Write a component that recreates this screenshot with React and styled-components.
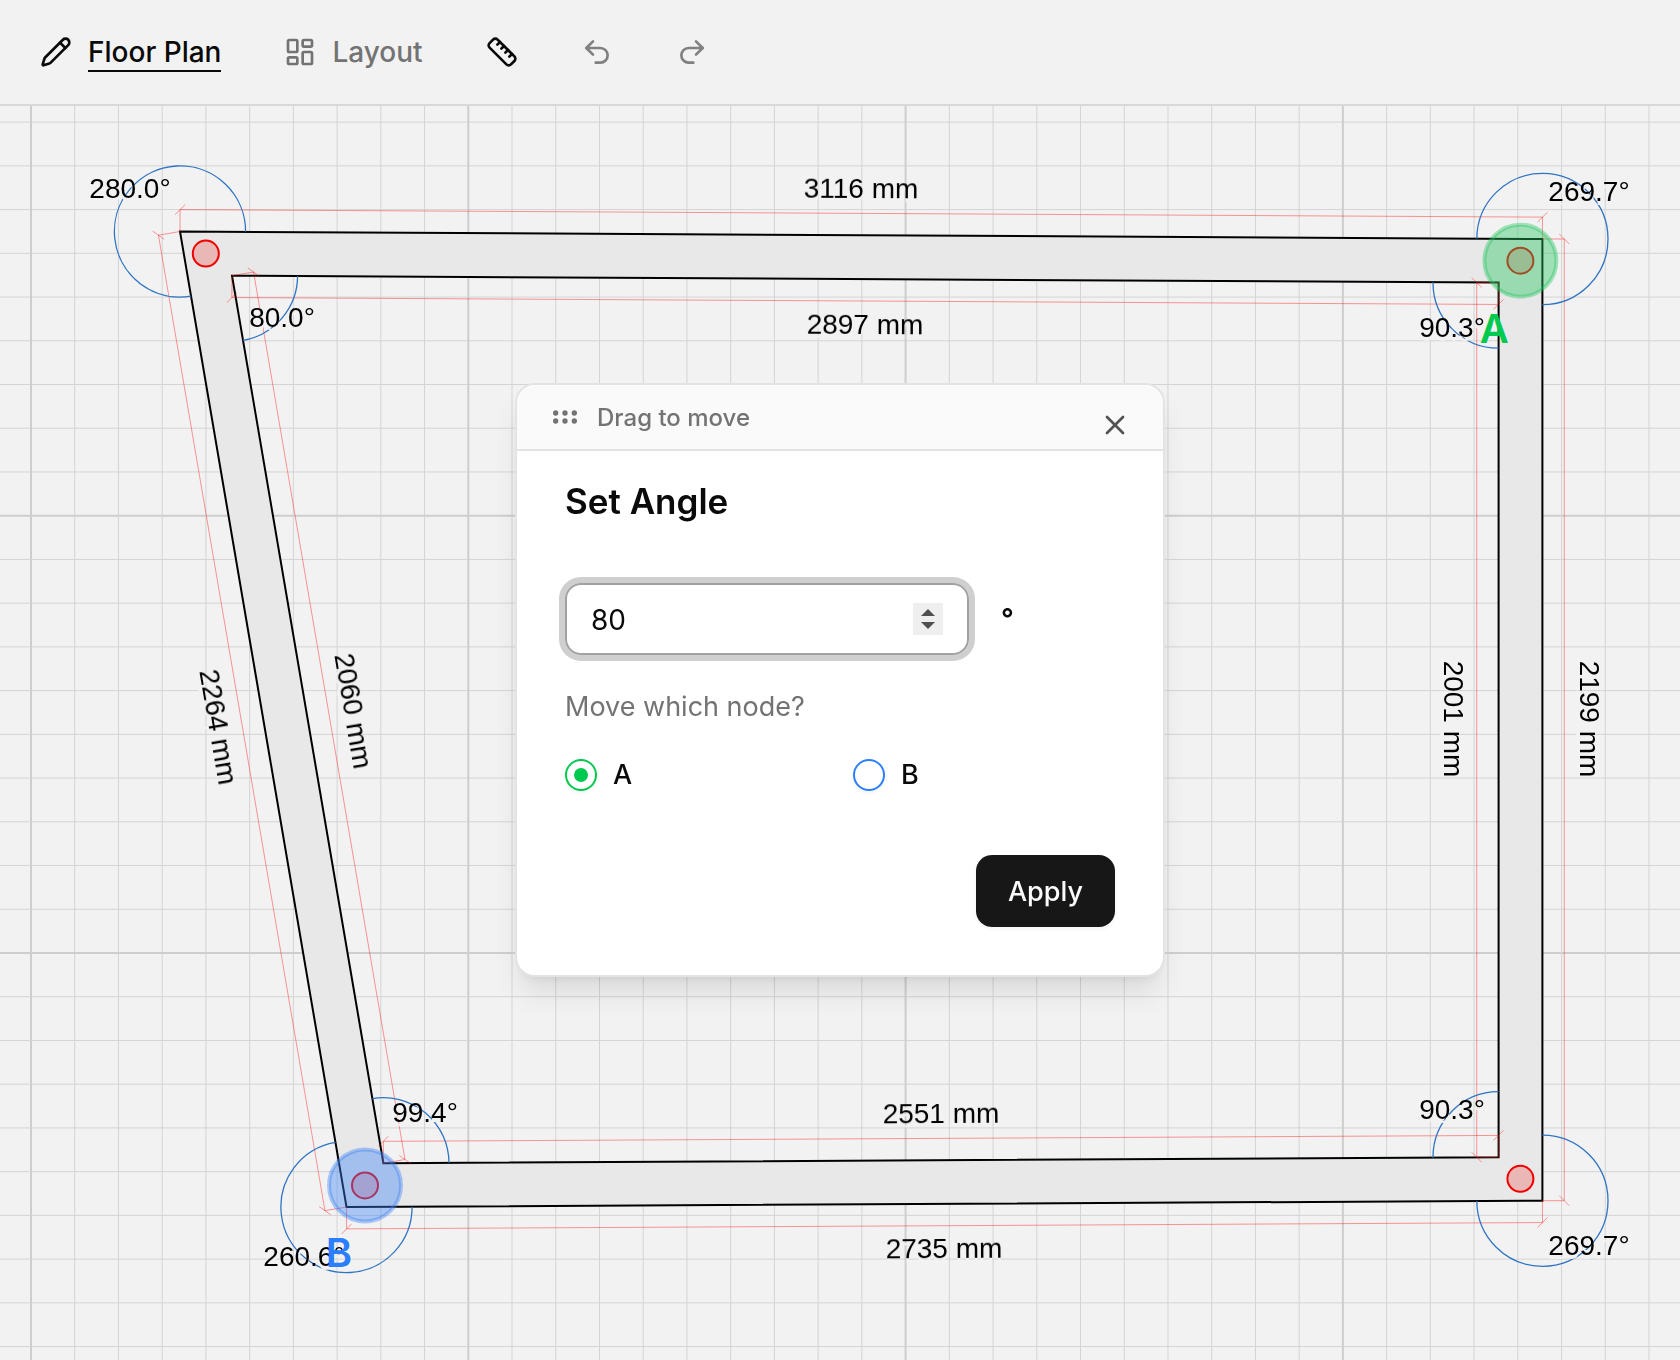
import React, { useState } from "react";
import styled, { createGlobalStyle } from "styled-components";
import {
  GripHorizontal,
  LayoutDashboard,
  Pencil,
  Redo2,
  Ruler,
  Undo2,
  X,
} from "lucide-react";

const GlobalStyle = createGlobalStyle`
  *, *::before, *::after {
    box-sizing: border-box;
  }
  body {
    margin: 0;
    background: #f2f2f2;
    color: #0a0a0a;
    font-family: Inter, "Liberation Sans", sans-serif;
  }
  button, input {
    font-family: inherit;
  }
`;

const Page = styled.div`
  display: flex;
  flex-direction: column;
  height: 100vh;
  overflow: hidden;
`;

const Toolbar = styled.header`
  display: flex;
  align-items: center;
  gap: 63px;
  padding: 32px 40px;
  border-bottom: 2px solid #d8d8d8;
`;

const ToolButton = styled.button`
  display: flex;
  align-items: center;
  gap: 16px;
  height: 40px;
  padding: 0;
  border: 0;
  background: none;
  color: ${(props) => props.$color || "#0a0a0a"};
  font-size: 28px;
  font-weight: 500;
  line-height: 36px;
  cursor: pointer;
`;

const ToolLabel = styled.span`
  border-top: 2px solid transparent;
  border-bottom: 2px solid ${(props) => (props.$active ? "#0a0a0a" : "transparent")};
`;

const Canvas = styled.main`
  position: relative;
  flex: 1;
  min-height: 0;
`;

const Drawing = styled.svg`
  display: block;
  width: 100%;
  height: 100%;
`;

const DrawingText = styled.text`
  font-family: "Liberation Sans", Arial, sans-serif;
  font-size: 28px;
  text-anchor: middle;
  fill: #000;
  filter: drop-shadow(0 4px 0 #f2f2f2);
`;

const MarkerText = styled.text`
  font-size: 40px;
  font-weight: 600;
  text-anchor: middle;
  fill: ${(props) => props.$color};
`;

const Dialog = styled.section`
  position: fixed;
  top: 50%;
  left: 50%;
  width: 650px;
  max-width: 100%;
  transform: translate(-50%, -50%);
  overflow: hidden;
  border: 2px solid #e3e3e3;
  border-radius: 20px;
  background: #fff;
  box-shadow: 0 20px 30px -6px rgba(0, 0, 0, 0.1), 0 8px 12px -8px rgba(0, 0, 0, 0.1);
`;

const DialogHandle = styled.div`
  display: flex;
  align-items: center;
  gap: 16px;
  height: 66px;
  padding: 0 32px;
  border-bottom: 2px solid #e3e3e3;
  background: #fafafa;
  color: #737373;
  font-size: 24px;
  font-weight: 500;
  cursor: move;
`;

const CloseButton = styled.button`
  position: absolute;
  top: 24px;
  right: 32px;
  display: flex;
  padding: 0;
  border: 0;
  background: none;
  color: #525252;
  cursor: pointer;
`;

const DialogForm = styled.form`
  display: flex;
  flex-direction: column;
  padding: 32px 48px 48px;
`;

const Title = styled.h2`
  margin: 0 0 64px;
  font-size: 35px;
  font-weight: 600;
  line-height: 36px;
`;

const AngleRow = styled.div`
  display: flex;
  align-items: center;
  gap: 32px;
  margin-bottom: 32px;
`;

const AngleField = styled.div`
  display: flex;
  align-items: center;
  width: 404px;
  height: 72px;
  padding: 0 24px;
  border: 2px solid #a1a1a1;
  border-radius: 16px;
  box-shadow: 0 0 0 6px #cfcfcf;
`;

const AngleInput = styled.input`
  flex: 1;
  min-width: 0;
  padding: 2px 0 0;
  border: 0;
  outline: 0;
  background: none;
  color: #0a0a0a;
  font-size: 28px;
  appearance: textfield;

  &::-webkit-inner-spin-button {
    appearance: none;
    margin: 0;
  }
`;

const Spinner = styled.div`
  display: flex;
  flex-direction: column;
  width: 30px;
  height: 32px;
  background: #efefef;
`;

const SpinButton = styled.button`
  display: flex;
  flex: 1;
  align-items: ${(props) => (props.$up ? "flex-end" : "flex-start")};
  justify-content: center;
  padding: ${(props) => (props.$up ? "0 0 2px" : "4px 0 0")};
  border: 0;
  background: none;
  color: #505050;
`;

const Unit = styled.span`
  font-size: 28px;
  font-weight: 600;
`;

const NodeGroup = styled.fieldset`
  margin: 0 0 64px;
  padding: 0;
  border: 0;
`;

const NodeLegend = styled.legend`
  margin-bottom: 32px;
  padding: 0;
  color: #737373;
  font-size: 27px;
  line-height: 40px;
`;

const NodeOptions = styled.div`
  display: grid;
  grid-template-columns: 1fr 1fr;
  gap: 26px;
`;

const NodeLabel = styled.label`
  display: flex;
  align-items: center;
  gap: 16px;
  font-size: 27px;
  font-weight: 500;
  line-height: 32px;
`;

const NodeRadio = styled.input`
  display: grid;
  place-items: center;
  width: 32px;
  height: 32px;
  margin: 0;
  appearance: none;
  border: 2px solid ${(props) => props.$color};
  border-radius: 50%;
  box-shadow: 0 2px 4px rgba(0, 0, 0, 0.05);

  &:checked::before {
    content: "";
    width: 14px;
    height: 14px;
    border-radius: 50%;
    background: ${(props) => props.$color};
  }
`;

const ApplyButton = styled.button`
  align-self: flex-end;
  height: 72px;
  padding: 0 32px;
  border: 0;
  border-radius: 16px;
  background: #171717;
  color: #fafafa;
  font-size: 27px;
  font-weight: 500;
  box-shadow: 0 2px 4px rgba(0, 0, 0, 0.05);
`;

const MM = 0.4373;
const GRID = 100 * MM;
const ARC_RADIUS = 150 * MM;
const DIM_OFFSET = 50 * MM;
const GRID_ORIGIN = { x: 31, y: 515.7 };

const outer = [
  [180, 231.5],
  [1542.4, 239],
  [1542.4, 1200.7],
  [346.5, 1207],
];
const inner = [
  [232, 275.7],
  [1498.6, 282.6],
  [1498.6, 1157.3],
  [383.4, 1163.2],
];
const nodes = [
  [205.8, 253.6],
  [1520.4, 260.7],
  [1520.4, 1178.8],
  [365, 1185.4],
];

// side is the direction the dimension is pushed away from the wall
const dimensions = [
  { from: outer[0], to: outer[1], side: -1, text: "3116 mm", at: [861, 189] },
  { from: inner[0], to: inner[1], side: 1, text: "2897 mm", at: [865, 325] },
  { from: outer[1], to: outer[2], side: -1, text: "2199 mm", at: [1589, 719] },
  { from: inner[1], to: inner[2], side: 1, text: "2001 mm", at: [1453, 719] },
  { from: outer[3], to: outer[2], side: 1, text: "2735 mm", at: [944, 1249] },
  { from: inner[3], to: inner[2], side: -1, text: "2551 mm", at: [941, 1114] },
  { from: outer[0], to: outer[3], side: 1, text: "2264 mm", at: [218, 727] },
  { from: inner[0], to: inner[3], side: -1, text: "2060 mm", at: [353, 711] },
];

const angles = [
  { at: outer[0], a: outer[3], b: outer[1], large: 1, text: "280.0°", label: [130, 189] },
  { at: outer[1], a: outer[0], b: outer[2], large: 1, text: "269.7°", label: [1589, 192] },
  { at: outer[2], a: outer[1], b: outer[3], large: 1, text: "269.7°", label: [1589, 1246] },
  { at: outer[3], a: outer[2], b: outer[0], large: 1, text: "260.6°", label: [304, 1257] },
  { at: inner[0], a: inner[1], b: inner[3], large: 0, text: "80.0°", label: [282, 318] },
  { at: inner[1], a: inner[2], b: inner[0], large: 0, text: "90.3°", label: [1452, 328] },
  { at: inner[2], a: inner[3], b: inner[1], large: 0, text: "90.3°", label: [1452, 1110] },
  { at: inner[3], a: inner[0], b: inner[2], large: 0, text: "99.4°", label: [425, 1113] },
];

const markers = [
  { name: "A", node: nodes[1], fill: "#22c55e", text: "#00c950" },
  { name: "B", node: nodes[3], fill: "#3b82f6", text: "#2b7fff" },
];

const toPath = (points) => `M${points.map((p) => p.join(" ")).join("L")}Z`;

const unit = (from, to) => {
  const dx = to[0] - from[0];
  const dy = to[1] - from[1];
  const len = Math.hypot(dx, dy);
  return [dx / len, dy / len];
};

const arcPath = ({ at, a, b, large }) => {
  const ua = unit(at, a);
  const ub = unit(at, b);
  const start = [at[0] + ua[0] * ARC_RADIUS, at[1] + ua[1] * ARC_RADIUS];
  const end = [at[0] + ub[0] * ARC_RADIUS, at[1] + ub[1] * ARC_RADIUS];
  return `M${start.join(" ")}A${ARC_RADIUS} ${ARC_RADIUS} 0 ${large} 1 ${end.join(" ")}`;
};

const dimensionPath = ({ from, to, side }) => {
  const [ux, uy] = unit(from, to);
  const ox = -uy * side * DIM_OFFSET;
  const oy = ux * side * DIM_OFFSET;
  const ends = [from, to].map(([x, y]) => [x + ox, y + oy]);
  const tx = (ux + uy) * 5;
  const ty = (uy - ux) * 5;
  const ticks = ends
    .map(([x, y]) => `M${x - tx} ${y - ty}L${x + tx} ${y + ty}`)
    .join("");
  return `M${from.join(" ")}L${ends[0].join(" ")}L${ends[1].join(" ")}L${to.join(" ")}${ticks}`;
};

const Grid = () => {
  const lines = [];
  for (let i = -12; i < 90; i++) {
    const major = i % 10 === 0;
    const x = GRID_ORIGIN.x + i * GRID;
    const y = GRID_ORIGIN.y + i * GRID;
    const style = { stroke: major ? "#cecece" : "#d4d4d4", strokeWidth: major ? 2 : 1 };
    lines.push(<line key={`x${i}`} x1={x} x2={x} y1={0} y2={4000} {...style} />);
    lines.push(<line key={`y${i}`} x1={0} x2={4000} y1={y} y2={y} {...style} />);
  }
  return <g>{lines}</g>;
};

const FloorPlan = () => (
  <Drawing role="img" aria-label="Floor plan">
    <g transform="translate(0 -106)">
      <Grid />
      <path
        d={toPath(outer) + toPath(inner)}
        fill="#e8e8e8"
        fillRule="evenodd"
        stroke="#000"
        strokeWidth="2"
      />
      {nodes.map(([x, y]) => (
        <circle
          key={`${x}-${y}`}
          cx={x}
          cy={y}
          r="13"
          fill="rgba(239, 68, 68, 0.3)"
          stroke="#f00000"
          strokeWidth="2"
        />
      ))}
      {dimensions.map((el) => (
        <path
          key={el.text}
          d={dimensionPath(el)}
          fill="none"
          stroke="#ff0000"
          strokeOpacity="0.4"
        />
      ))}
      {angles.map((el) => (
        <path key={el.at.join()} d={arcPath(el)} fill="none" stroke="#2f74c4" strokeWidth="1.3" />
      ))}
      {dimensions.map((el) => {
        const [ux, uy] = unit(el.from, el.to);
        const deg = (Math.atan2(uy, ux) * 180) / Math.PI;
        return (
          <DrawingText
            key={el.text}
            dy="9"
            transform={`translate(${el.at.join(" ")}) rotate(${deg})`}
          >
            {el.text}
          </DrawingText>
        );
      })}
      {angles.map((el) => (
        <DrawingText key={el.at.join()} x={el.label[0]} y={el.label[1]} dy="9">
          {el.text}
        </DrawingText>
      ))}
      {markers.map((el) => (
        <g key={el.name}>
          <circle
            cx={el.node[0]}
            cy={el.node[1]}
            r="36"
            fill={el.fill}
            fillOpacity="0.4"
            stroke={el.fill}
            strokeOpacity="0.4"
            strokeWidth="4"
          />
          <MarkerText x={el.node[0] - 26} y={el.node[1] + 82} $color={el.text}>
            {el.name}
          </MarkerText>
        </g>
      ))}
    </g>
  </Drawing>
);

const AngleDialog = () => {
  const [angle, setAngle] = useState(80);
  const [node, setNode] = useState("A");

  return (
    <Dialog role="dialog" aria-labelledby="angle-title">
      <DialogHandle>
        <GripHorizontal size={32} />
        <span>Drag to move</span>
      </DialogHandle>
      <CloseButton type="button" aria-label="Close">
        <X size={32} />
      </CloseButton>
      <DialogForm onSubmit={(e) => e.preventDefault()}>
        <Title id="angle-title">Set Angle</Title>
        <AngleRow>
          <AngleField>
            <AngleInput
              type="number"
              aria-label="Angle"
              value={angle}
              onChange={(e) => setAngle(Number(e.target.value))}
            />
            <Spinner>
              <SpinButton
                $up
                type="button"
                aria-label="Increase"
                onClick={() => setAngle(angle + 1)}
              >
                <svg width="14" height="7">
                  <path d="M0 7L7 0L14 7Z" fill="currentColor" />
                </svg>
              </SpinButton>
              <SpinButton
                type="button"
                aria-label="Decrease"
                onClick={() => setAngle(angle - 1)}
              >
                <svg width="14" height="7">
                  <path d="M0 0L7 7L14 0Z" fill="currentColor" />
                </svg>
              </SpinButton>
            </Spinner>
          </AngleField>
          <Unit>°</Unit>
        </AngleRow>
        <NodeGroup>
          <NodeLegend>Move which node?</NodeLegend>
          <NodeOptions>
            {[
              ["A", "#00c950"],
              ["B", "#2b7fff"],
            ].map(([name, color]) => (
              <NodeLabel key={name}>
                <NodeRadio
                  type="radio"
                  name="node"
                  value={name}
                  checked={node === name}
                  onChange={() => setNode(name)}
                  $color={color}
                />
                {name}
              </NodeLabel>
            ))}
          </NodeOptions>
        </NodeGroup>
        <ApplyButton type="submit">Apply</ApplyButton>
      </DialogForm>
    </Dialog>
  );
};

const App = () => (
  <Page>
    <GlobalStyle />
    <Toolbar>
      <ToolButton type="button">
        <Pencil size={32} />
        <ToolLabel $active>Floor Plan</ToolLabel>
      </ToolButton>
      <ToolButton type="button" $color="#737373">
        <LayoutDashboard size={32} />
        <ToolLabel>Layout</ToolLabel>
      </ToolButton>
      <ToolButton type="button" aria-label="Measure">
        <Ruler size={32} />
      </ToolButton>
      <ToolButton type="button" aria-label="Undo" $color="#808080">
        <Undo2 size={32} />
      </ToolButton>
      <ToolButton type="button" aria-label="Redo" $color="#808080">
        <Redo2 size={32} />
      </ToolButton>
    </Toolbar>
    <Canvas>
      <FloorPlan />
    </Canvas>
    <AngleDialog />
  </Page>
);

export default App;
